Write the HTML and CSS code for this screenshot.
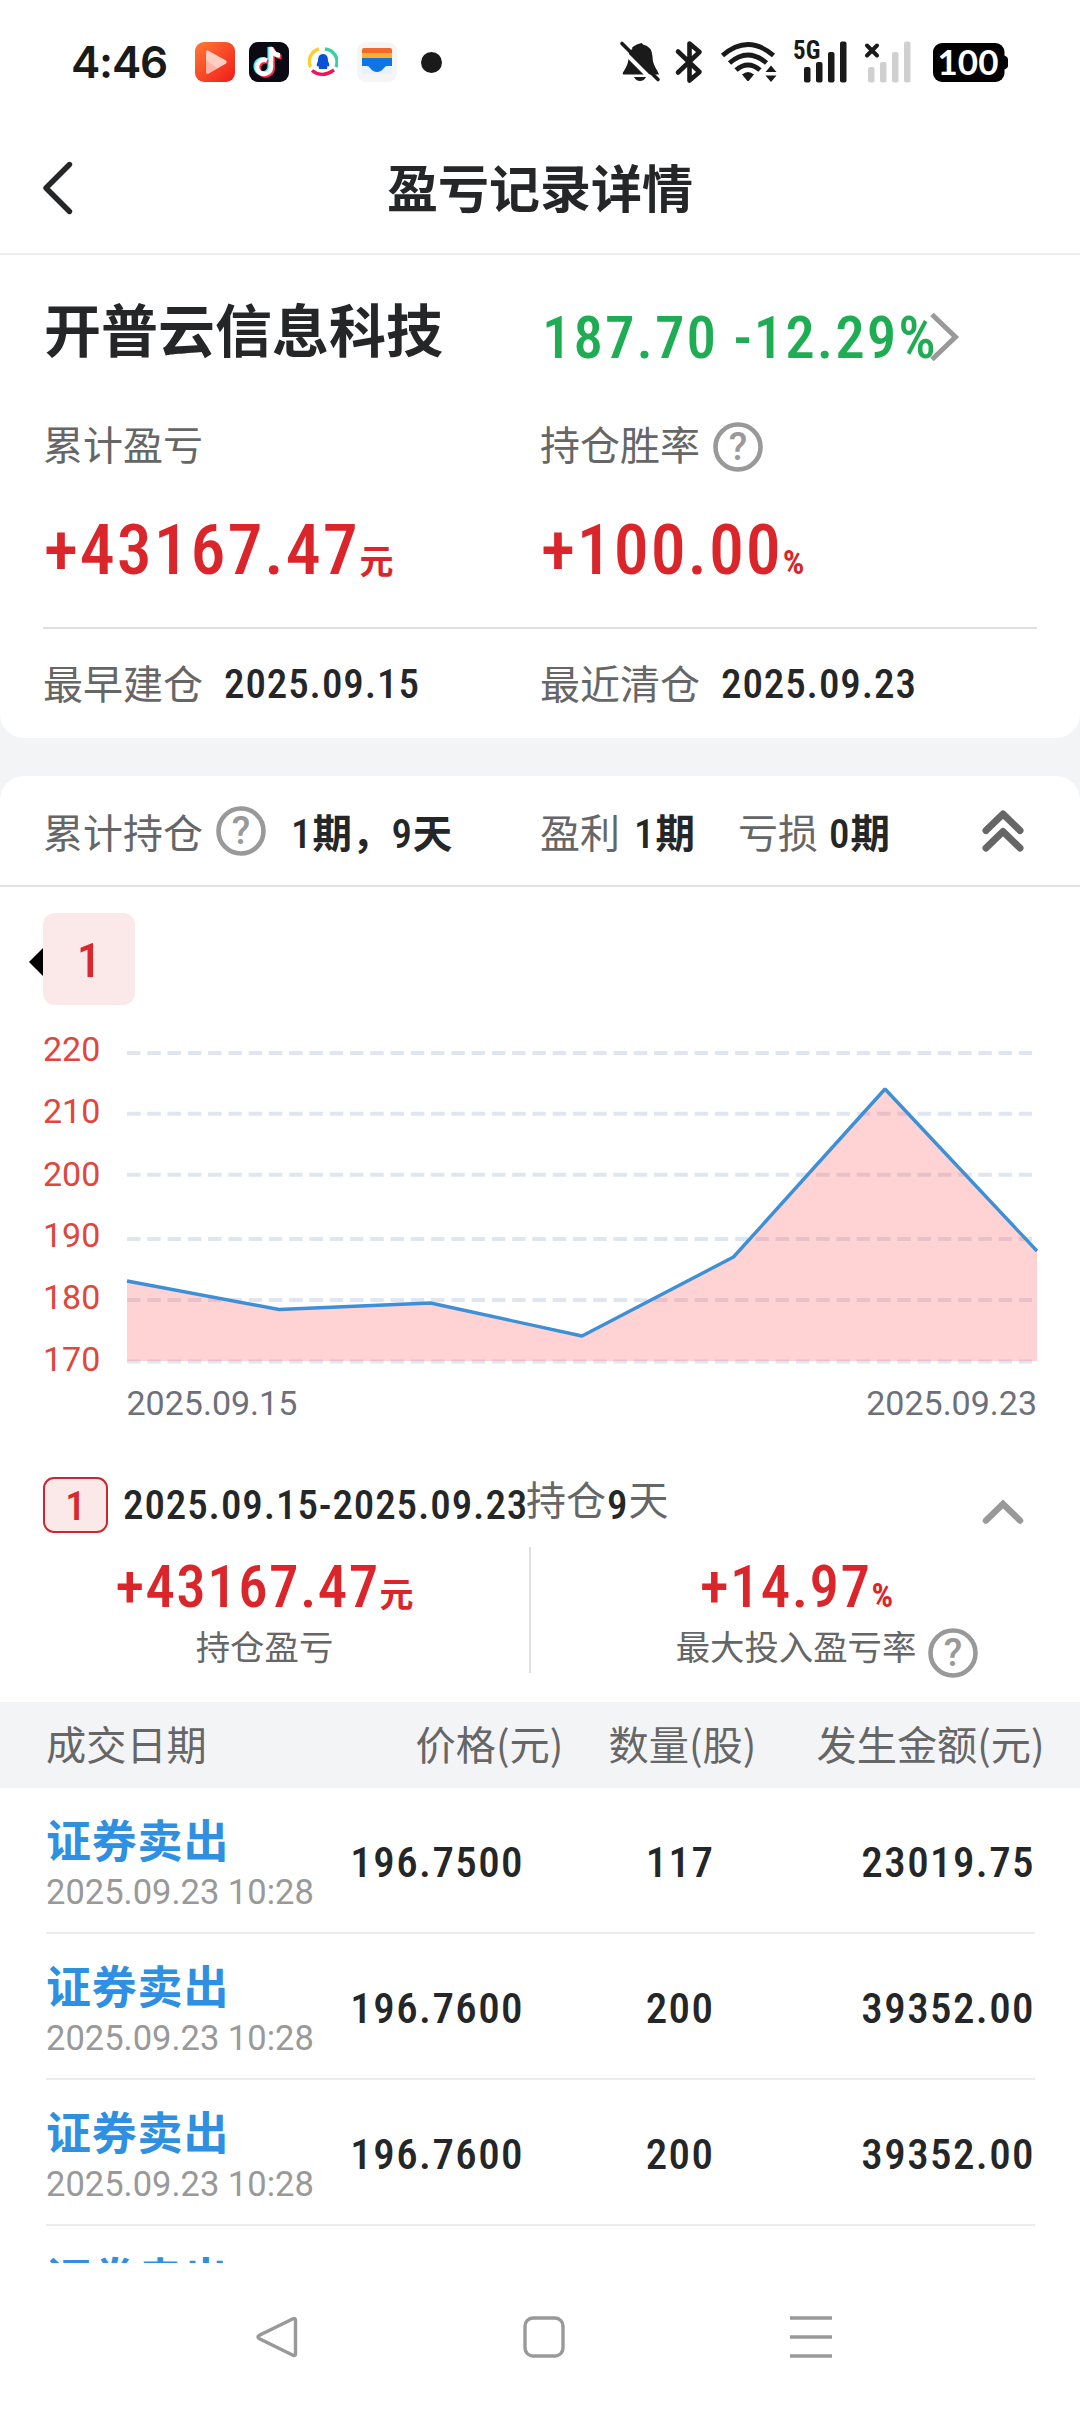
FILE: index.html
```html
<!DOCTYPE html>
<html lang="zh-CN">
<head>
    <meta charset="UTF-8">
    <title>盈亏记录详情</title>
    <link rel="stylesheet" href="styles.css">
</head>
<body>

<div class="status-bar">
    <div class="status-left">
        <span class="time">4:46</span>
        <svg width="40" height="40" viewBox="0 0 40 40">
            <defs>
                <linearGradient id="playBg" x1="0" y1="0" x2="1" y2="1">
                    <stop offset="0" stop-color="#ff7a35"/>
                    <stop offset="1" stop-color="#f01a1a"/>
                </linearGradient>
            </defs>
            <rect width="40" height="40" rx="9" fill="url(#playBg)"/>
            <path d="M13 8.5 31 18.5Q32.5 20 31 21.5L13.5 31.5Q11 32 11 30V10Q11 8 13 8.5Z" fill="#ffcfc4"/>
            <path d="M11 18 22 26 13.5 31.5Q11 32 11 30Z" fill="#ffb3a5"/>
        </svg>
        <svg width="40" height="40" viewBox="0 0 40 40">
            <rect width="40" height="40" rx="9" fill="#0b0a14"/>
            <g fill="none" stroke-width="4.6">
                <path d="M18 18.5a7 7 0 1 0 4 7V5.5c1 5 4 7.5 9 8" stroke="#25f4ee" transform="translate(-1.3 -.5)"/>
                <path d="M18 18.5a7 7 0 1 0 4 7V5.5c1 5 4 7.5 9 8" stroke="#fe2c55" transform="translate(1.6 1.5)"/>
                <path d="M18 18.5a7 7 0 1 0 4 7V5.5c1 5 4 7.5 9 8" stroke="#fff"/>
            </g>
        </svg>
        <svg class="icon-qq" width="30" height="30" viewBox="0 0 30 30">
            <g fill="none" stroke-width="3.4">
                <path d="M2.5 20A13 13 0 0 1 11 2" stroke="#fbd02c"/>
                <path d="M17 2a13 13 0 0 1 11 18" stroke="#36d0a3"/>
                <path d="M4 23.5q10 8 22-.5" stroke="#f0145f"/>
            </g>
            <path d="M15 7c-4.5 0-5 4-5 7-1.5 3-1.5 4-1 5.5l1.5-.5.5 3h8l.5-3 1.5.5c.5-1.5.5-2.5-1-5.5 0-3-.5-7-5-7z" fill="#0753d6"/>
        </svg>
        <svg class="icon-wallet" width="40" height="40" viewBox="0 0 40 40">
            <rect width="40" height="40" rx="9" fill="#f5f5f6"/>
            <path d="M5 24h30v8H5z" fill="#e9f1fc"/>
            <path d="M5 12V8q0-2 2-2h26q2 0 2 2v4z" fill="#f2692c"/>
            <path d="M5 11h30v6H5z" fill="#fcae2c"/>
            <path d="M5 16h30v8h-5q-2 0-3 2-3 4-7 4t-7-4q-1-2-3-2H5z" fill="#0f75e4"/>
        </svg>
        <span class="dot"></span>
    </div>
    <svg class="status-right" width="390" height="64" viewBox="619 30 390 64">
        <!-- muted bell -->
        <path d="M640 43.5q2-1.5 3 1 9 2 9.5 12c0 9 5 13 6.5 18H624q-2 0-1-2c3-5 5-8 5.5-14 0-9 4-13 11.5-15z" fill="#1a1a1a"/>
        <path d="M634 77h12q-2 4-6 4t-6-4z" fill="#1a1a1a"/>
        <path d="M622 39 629 51" stroke="#fff" stroke-width="8"/>
        <path d="M619 47 653 81" stroke="#fff" stroke-width="4"/>
        <path d="M622 43.5 658 79.5" stroke="#1a1a1a" stroke-width="3.6" stroke-linecap="round"/>
        <!-- bluetooth -->
        <path d="M678 51.5 699.5 72 689.5 80.5V43.5L699.5 52 678 72.5" fill="none" stroke="#1a1a1a" stroke-width="4.6" stroke-linejoin="round" stroke-linecap="round"/>
        <!-- wifi -->
        <g fill="none" stroke="#1a1a1a" stroke-width="4.8">
            <path d="M722.5 55.5q25.5-22 51 0"/>
            <path d="M729.5 63q18.5-16 37 0"/>
            <path d="M736 70q12-10 24 0"/>
        </g>
        <path d="M742 74.5q6-5 12 0l-5 6q-1 1-2 0z" fill="#1a1a1a"/>
        <path d="M765.5 72h11l-5.5-6.5zM765.5 75.5h11L771 82z" fill="#1a1a1a"/>
        <!-- signal 1 -->
        <text x="793" y="59" class="net">5G</text>
        <g fill="#1a1a1a">
            <rect x="804" y="67" width="6.5" height="15.5" rx="2"/>
            <rect x="816" y="62" width="6.5" height="20.5" rx="2"/>
            <rect x="828" y="52" width="6.5" height="30.5" rx="2"/>
            <rect x="840" y="41.5" width="6.5" height="41" rx="2"/>
        </g>
        <!-- signal 2, no service -->
        <path d="M867 45.5 877 55.5M877 45.5 867 55.5" stroke="#1a1a1a" stroke-width="4" stroke-linecap="round"/>
        <g fill="#d0d0d0">
            <rect x="868" y="67" width="6.5" height="15.5" rx="2"/>
            <rect x="880" y="62" width="6.5" height="20.5" rx="2"/>
            <rect x="892" y="52" width="6.5" height="30.5" rx="2"/>
            <rect x="904" y="41.5" width="6.5" height="41" rx="2"/>
        </g>
        <!-- battery -->
        <rect x="933" y="43" width="71.5" height="39" rx="9"/>
        <path d="M1004 55.5q4 1 4 4v6q0 3-4 4z"/>
        <text x="968" y="75" class="battery-text">100</text>
    </svg>
</div>

<div class="header">
    <svg class="back" width="34" height="56" viewBox="0 0 34 56">
        <path d="M29.5 4.5 6 28 29.5 51.5" fill="none" stroke="#242628" stroke-width="5.4" stroke-linecap="round" stroke-linejoin="round"/>
    </svg>
    <h1>盈亏记录详情</h1>
</div>

<div class="card summary">
    <div class="row row-name">
        <div class="stock-name">开普云信息科技</div>
        <div class="quote">
            <span class="num">187.70 -12.29%</span>
            <svg width="30" height="50" viewBox="0 0 30 50">
                <path d="M2 2.5 25.5 25 2 47.5" fill="none" stroke="#999" stroke-width="5"/>
            </svg>
        </div>
    </div>
    <div class="row row-label">
        <div class="label">累计盈亏</div>
        <div class="with-help">
            <span class="label">持仓胜率</span>
            <svg class="help" viewBox="0 0 50 50"><circle cx="25" cy="25" r="22.5"/><text x="25" y="38">?</text></svg>
        </div>
    </div>
    <div class="row row-value">
        <div class="big num">+43167.47<small>元</small></div>
        <div class="big num">+100.00<small>%</small></div>
    </div>
    <div class="row row-date">
        <div class="pair"><span class="label">最早建仓</span><span class="date num">2025.09.15</span></div>
        <div class="pair"><span class="label">最近清仓</span><span class="date num">2025.09.23</span></div>
    </div>
</div>

<div class="card detail">
    <div class="totals">
        <div class="total-hold">
            <span class="label">累计持仓</span>
            <svg class="help" viewBox="0 0 50 50"><circle cx="25" cy="25" r="22.5"/><text x="25" y="38">?</text></svg>
            <span class="strong"><i>1</i>期，<i>9</i>天</span>
        </div>
        <div class="total-win"><span class="label">盈利</span><span class="strong"><i>1</i>期</span></div>
        <div class="total-loss"><span class="label">亏损</span><span class="strong"><i>0</i>期</span></div>
        <svg class="fold" width="44" height="46" viewBox="0 0 44 46">
            <path d="M5 22.5 22 6 39 22.5M5 40 22 23.5 39 40" fill="none" stroke="#666" stroke-width="7" stroke-linecap="round" stroke-linejoin="round"/>
        </svg>
    </div>

    <div class="tabs">
        <span class="arrow-left"></span>
        <span class="tab num">1</span>
    </div>

    <svg class="chart" width="1080" height="410" viewBox="0 1020 1080 410">
        <path class="grid" d="M127 1053H1032M127 1113.7H1032M127 1174.7H1032M127 1239H1032M127 1300H1032M127 1361.5H1032"/>
        <path class="area" d="M127 1281 279 1309.5 430.5 1303 582 1336 733.5 1257 885 1089 1037 1251V1361H127Z"/>
        <path class="line" d="M127 1281 279 1309.5 430.5 1303 582 1336 733.5 1257 885 1089 1037 1251"/>
        <g class="axis-y">
            <text x="43" y="1061">220</text>
            <text x="43" y="1123">210</text>
            <text x="43" y="1185.5">200</text>
            <text x="43" y="1246.5">190</text>
            <text x="43" y="1309">180</text>
            <text x="43" y="1371">170</text>
        </g>
        <g class="axis-x">
            <text x="126.5" y="1415">2025.09.15</text>
            <text x="1037" y="1415" text-anchor="end">2025.09.23</text>
        </g>
    </svg>

    <div class="period">
        <span class="badge num">1</span>
        <span class="range num">2025.09.15-2025.09.23</span>
        <span class="label">持仓</span>
        <span class="days num">9</span>
        <span class="label">天</span>
        <svg class="fold" width="44" height="28" viewBox="0 0 44 28">
            <path d="M5 22.5 22 6 39 22.5" fill="none" stroke="#999" stroke-width="6.5" stroke-linecap="round"/>
        </svg>
    </div>

    <div class="stats">
        <div class="stat">
            <div class="mid num">+43167.47<small>元</small></div>
            <div class="stat-label">持仓盈亏</div>
        </div>
        <div class="stat stat-rate">
            <div class="mid num">+14.97<small>%</small></div>
            <div class="stat-label">最大投入盈亏率
                <svg class="help" viewBox="0 0 50 50"><circle cx="25" cy="25" r="22.5"/><text x="25" y="38">?</text></svg>
            </div>
        </div>
    </div>

    <div class="table-head">
        <span>成交日期</span>
        <span>价格(元)</span>
        <span>数量(股)</span>
        <span>发生金额(元)</span>
    </div>
    <div class="trades">
        <div class="trade">
            <div><div class="side">证券卖出</div><div class="when">2025.09.23 10:28</div></div>
            <span class="num">196.7500</span><span class="num">117</span><span class="num">23019.75</span>
        </div>
        <div class="trade">
            <div><div class="side">证券卖出</div><div class="when">2025.09.23 10:28</div></div>
            <span class="num">196.7600</span><span class="num">200</span><span class="num">39352.00</span>
        </div>
        <div class="trade">
            <div><div class="side">证券卖出</div><div class="when">2025.09.23 10:28</div></div>
            <span class="num">196.7600</span><span class="num">200</span><span class="num">39352.00</span>
        </div>
        <div class="trade">
            <div><div class="side">证券卖出</div></div>
        </div>
    </div>
</div>

<div class="nav-bar">
    <svg width="42" height="42" viewBox="0 0 42 42"><path d="M37 2.8Q39.5 1.5 39.5 4.5V37.5Q39.5 40.5 37 39.2L3 22.5Q1 21 3 19.5Z"/></svg>
    <svg width="42" height="42" viewBox="0 0 42 42"><rect x="2" y="2" width="38" height="38" rx="8"/></svg>
    <svg width="42" height="42" viewBox="0 0 42 42"><path d="M0 2H42M0 21H42M0 40H42"/></svg>
</div>

</body>
</html>
```
FILE: styles.css
```css
* {
    box-sizing: border-box;
}
body {
    margin: 0;
    width: 1080px;
    height: 2412px;
    overflow: hidden;
    background: #f3f4f6;
    color: #242628;
    font-family: "Noto Sans CJK SC", sans-serif;
}
svg {
    display: block;
    flex: none;
}
.num {
    font-family: Roboto, "Noto Sans CJK SC", sans-serif;
    font-weight: 500;
    font-stretch: 75%;
    white-space: nowrap;
}

/* status bar */
.status-bar {
    height: 124px;
    background: #fff;
    display: flex;
    justify-content: space-between;
    align-items: center;
    padding: 0 71px;
}
.status-left {
    display: flex;
    align-items: center;
}
.time {
    width: 124px;
    font: 600 44px/60px Inter, sans-serif;
    letter-spacing: -1.2px;
    color: #1a1a1a;
}
.status-left svg + svg {
    margin-left: 14px;
}
.status-left svg.icon-qq,
.status-left svg.icon-wallet {
    margin-left: 19px;
}
.dot {
    width: 21px;
    height: 21px;
    border-radius: 50%;
    background: #1a1a1a;
    margin-left: 24px;
}
.net {
    font: 700 25px Roboto, sans-serif;
    font-stretch: 75%;
    fill: #1a1a1a;
}
.battery-text {
    font: 700 35px Lato, sans-serif;
    fill: #fff;
    text-anchor: middle;
}

/* title bar */
.header {
    height: 131px;
    background: #fff;
    border-bottom: 2px solid #eee;
    display: flex;
    align-items: center;
    padding: 0 40px;
}
.header h1 {
    flex: 1;
    margin: 0 34px 0 0;
    text-align: center;
    font-size: 51px;
    font-weight: 700;
    line-height: 70px;
    padding-bottom: 6px;
}
.header .back {
    margin-bottom: 1px;
}

.card {
    background: #fff;
}
.label {
    font-size: 40px;
    line-height: 60px;
    color: #666;
    white-space: nowrap;
}
.help {
    width: 50px;
    height: 50px;
}
.help circle {
    fill: none;
    stroke: #999;
    stroke-width: 4.6;
}
.help text {
    font: 500 38px Roboto, sans-serif;
    fill: #999;
    text-anchor: middle;
}

/* summary card */
.summary {
    height: 483px;
    border-radius: 0 0 24px 24px;
    padding: 29px 43px 0;
}
.row {
    display: grid;
    grid-template-columns: 497px 1fr;
    align-items: center;
}
.row-name {
    height: 92px;
}
.stock-name {
    font-size: 57px;
    font-weight: 700;
    line-height: 80px;
    padding: 0 0 6px 1px;
}
.quote {
    display: flex;
    align-items: center;
    padding: 14px 0 0 2px;
    font-size: 59px;
    color: #1fad53;
}
.quote .num {
    width: 388px;
    letter-spacing: 2px;
}
.row-label {
    height: 74px;
    margin-top: 32px;
}
.row-label .label {
    padding-bottom: 4px;
}
.with-help {
    display: flex;
    align-items: center;
    gap: 13px;
}
.with-help .help {
    margin-top: 4px;
}
.row-value {
    height: 100px;
    margin-top: 18px;
}
.big {
    font-size: 70px;
    line-height: 100px;
    letter-spacing: 1.9px;
    color: #da252a;
    padding-left: 1px;
}
.big small,
.mid small {
    font-size: 34px;
    font-weight: 700;
    line-height: 1;
    letter-spacing: 0;
}
.row-date {
    margin-top: 27px;
    height: 111px;
    border-top: 2px solid #e0e0e0;
}
.pair {
    display: flex;
    align-items: center;
    gap: 21px;
}
.pair .label {
    padding-bottom: 3px;
}
.date,
.range,
.days {
    font-size: 41px;
    line-height: 60px;
    letter-spacing: 0.9px;
}

/* detail card */
.detail {
    margin-top: 38px;
    border-radius: 24px 24px 0 0;
}
.totals {
    height: 111px;
    border-bottom: 2px solid #e0e0e0;
    display: flex;
    align-items: center;
    padding: 0 55px 0 43px;
}
.totals > div {
    display: flex;
    align-items: center;
}
.total-hold {
    width: 497px;
}
.total-hold .help {
    margin: 0 25px 0 13px;
}
.total-win {
    width: 198px;
    gap: 14px;
}
.total-loss {
    gap: 11px;
}
.totals .fold {
    margin-left: auto;
}
.strong {
    font-size: 39.5px;
    font-weight: 700;
    line-height: 60px;
    white-space: nowrap;
}
.strong i {
    font: 500 41px Roboto, sans-serif;
    font-stretch: 75%;
    letter-spacing: 0.9px;
}
.tabs {
    height: 133px;
    padding: 26px 28px 0;
    display: flex;
}
.arrow-left {
    width: 15px;
    height: 28px;
    margin-top: 35px;
    border: 14px solid transparent;
    border-left: 0;
    border-right: 14px solid #000;
}
.tab {
    width: 92px;
    height: 92px;
    border-radius: 12px;
    background: #fbe8e9;
    color: #d8282d;
    font-size: 49px;
    line-height: 95px;
    text-align: center;
}

/* price chart */
.grid {
    fill: none;
    stroke: #e0e6f1;
    stroke-width: 4;
    stroke-dasharray: 13.5 6.77;
}
.area {
    fill: rgba(255, 80, 80, 0.25);
}
.line {
    fill: none;
    stroke: #3d8fd6;
    stroke-width: 3.4;
    stroke-linejoin: bevel;
}
.chart text {
    font: 400 34px Roboto, sans-serif;
}
.axis-y text {
    fill: #e0463c;
}
.axis-x text {
    fill: #6e7079;
}

/* holding period */
.period {
    height: 117px;
    padding: 33px 55px 0 43px;
    display: flex;
    align-items: center;
}
.badge {
    width: 65px;
    height: 56px;
    border: 2px solid #c9282d;
    border-radius: 11px;
    background: #fbe8e9;
    color: #d8282d;
    font-size: 41px;
    line-height: 55px;
    text-align: center;
}
.range {
    margin-left: 15px;
    width: 403px;
}
.period .label {
    padding-bottom: 14px;
}
.period .days {
    margin-left: 1px;
}
.period .fold {
    margin: 14px 0 0 auto;
}
.stats {
    height: 155px;
    display: grid;
    grid-template-columns: 531px 1fr;
}
.stat {
    height: 126px;
    text-align: center;
}
.stat:first-child {
    border-right: 2px solid #e0e0e0;
}
.stat-rate {
    padding-right: 18px;
}
.stat-rate .stat-label {
    padding-left: 61px;
}
.mid {
    height: 76px;
    font-size: 59px;
    line-height: 80px;
    letter-spacing: 1.4px;
    color: #da252a;
}
.stat-label {
    display: flex;
    justify-content: center;
    gap: 12px;
    font-size: 34.4px;
    line-height: 45px;
    color: #666;
}
.stat-label .help {
    margin-top: 5px;
}

/* trades */
.table-head {
    height: 86px;
    background: #f3f4f6;
    display: grid;
    grid-template-columns: 369.5px 193px 208px 1fr;
    padding-left: 46px;
    font-size: 40.2px;
    line-height: 82px;
    color: #666;
    white-space: nowrap;
}
.trades {
    height: 475px;
    overflow: hidden;
    padding: 0 45px 0 46px;
}
.trade {
    height: 146px;
    border-bottom: 2px solid #ebebeb;
    display: grid;
    grid-template-columns: 278px 200px 220px 1fr;
    font-size: 43px;
    line-height: 148px;
    letter-spacing: 1.4px;
    text-align: right;
}
.trade > div {
    text-align: left;
    padding-top: 21px;
}
.trade > span:nth-child(3) {
    text-align: center;
    padding-left: 92px;
}
.side {
    font-size: 45px;
    font-weight: 700;
    line-height: 60px;
    letter-spacing: 0.8px;
    color: #2f8fe0;
}
.when {
    font: 400 34.5px/46px Roboto, sans-serif;
    letter-spacing: 0;
    color: #999;
    white-space: nowrap;
}

/* system navigation */
.nav-bar {
    height: 149px;
    background: #fff;
    display: flex;
    gap: 225px;
    padding: 53px 0 0 256px;
}
.nav-bar svg {
    fill: none;
    stroke: #999;
    stroke-width: 3.4;
}
```
